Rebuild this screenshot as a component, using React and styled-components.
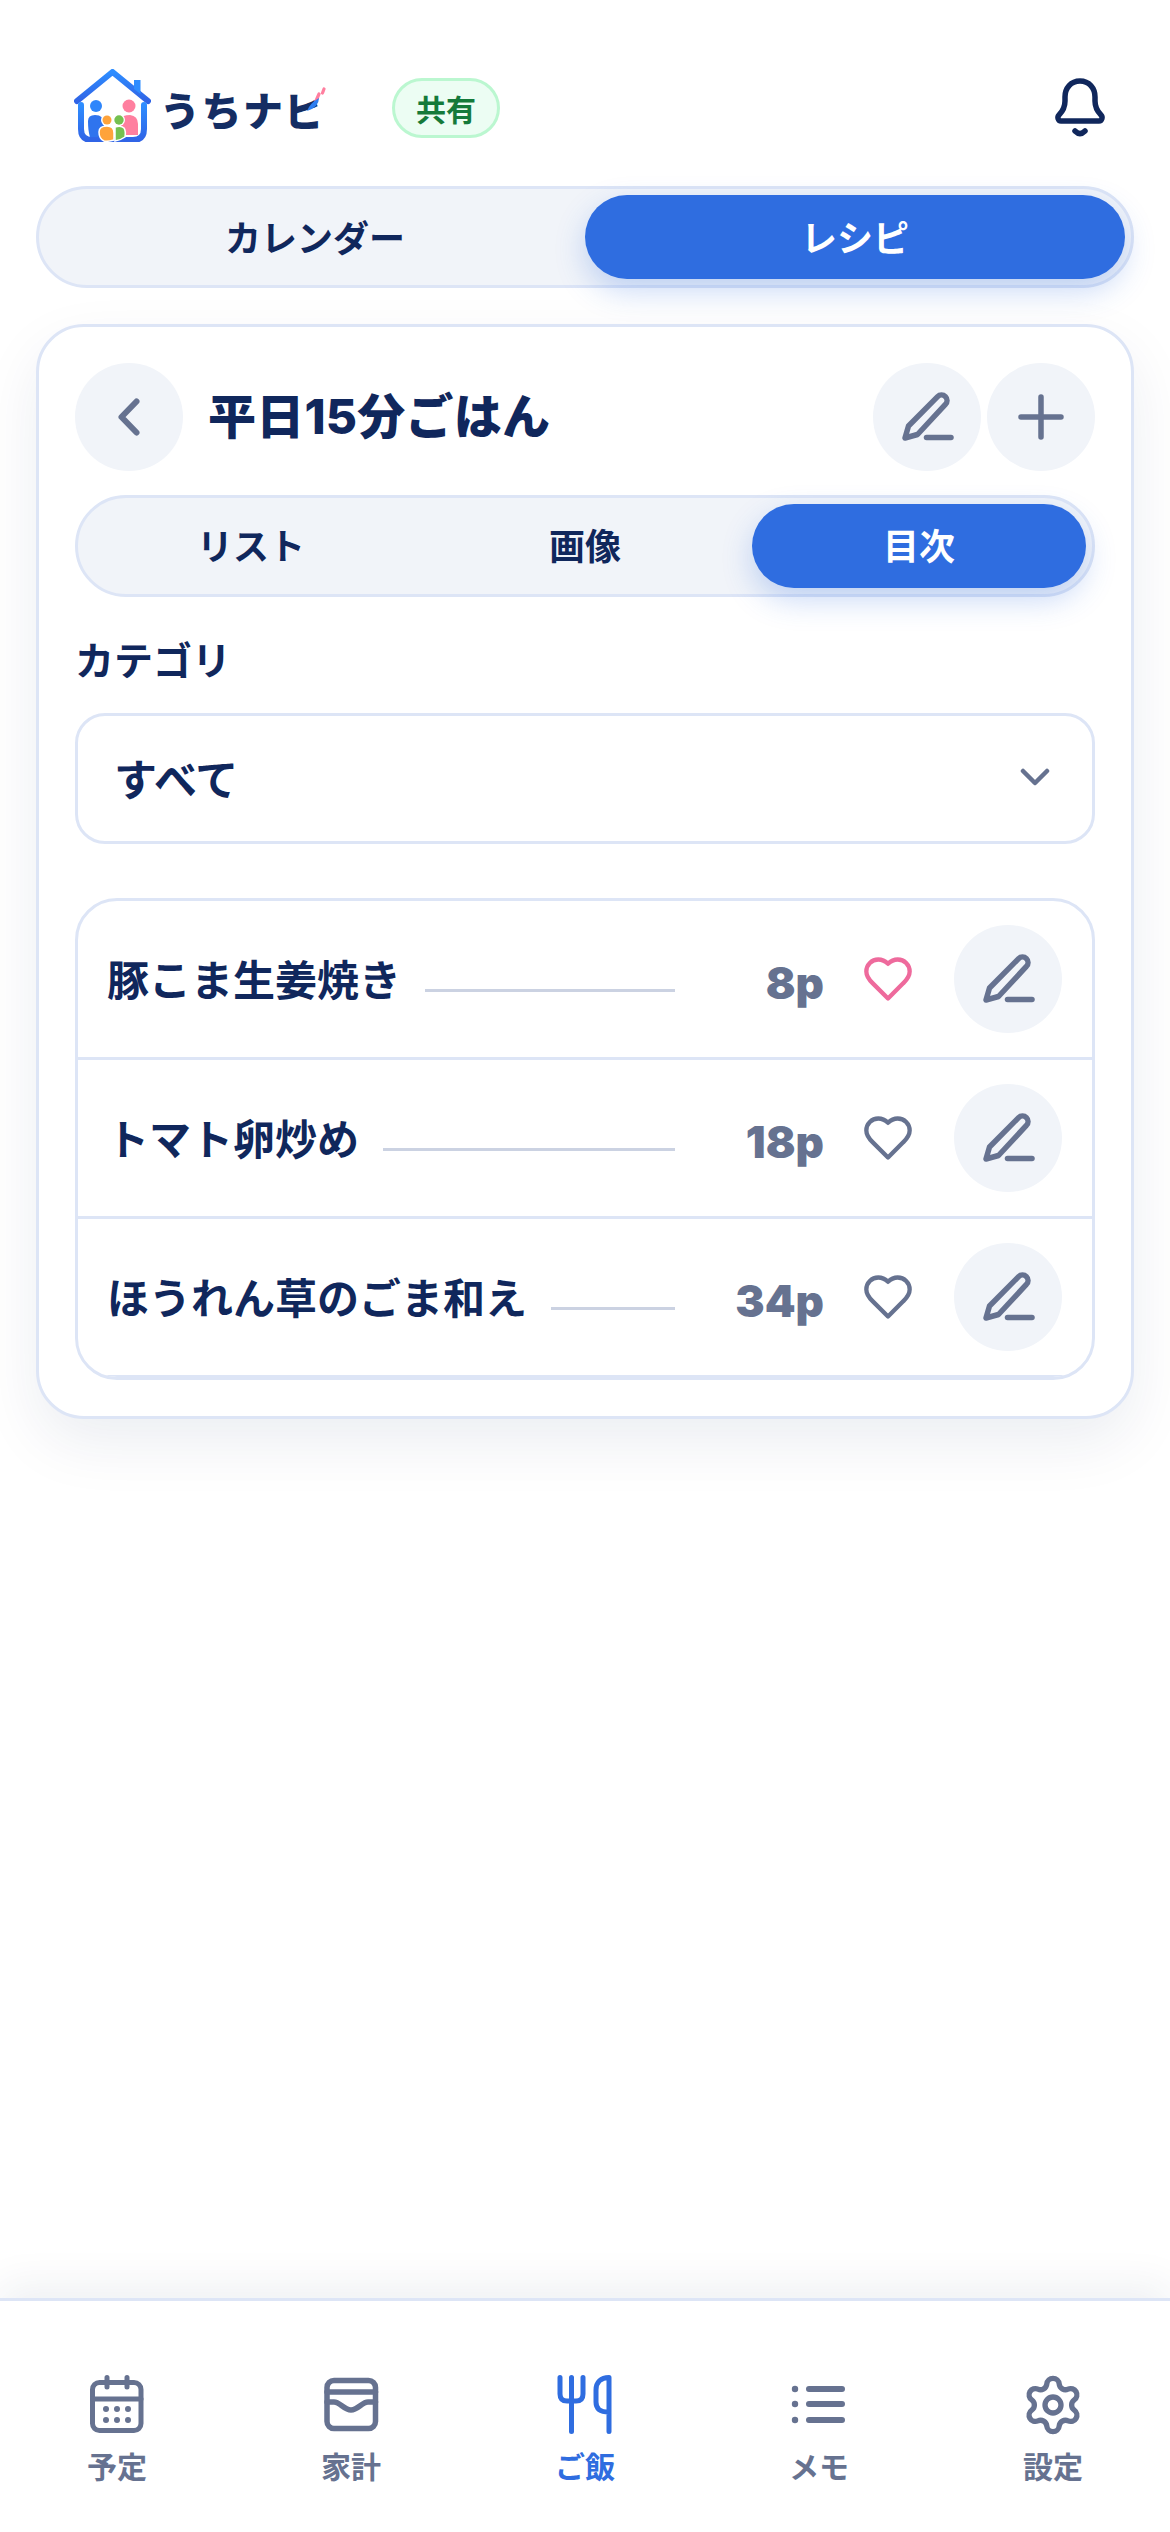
import React from "react";
import styled, { createGlobalStyle } from "styled-components";
import { Settings } from "lucide-react";

const NAVY = "#10275c";
const SLATE = "#667290";
const BLUE = "#2f6de0";
const LINE = "#dde5f6";
const SOFT = "#f1f4f9";
const FONT = `Inter, "Noto Sans CJK JP", sans-serif`;

const Global = createGlobalStyle`
  html, body { margin: 0; padding: 0; background: #fff; }
  body { font-family: ${FONT}; color: ${NAVY}; }
  * { box-sizing: border-box; }
`;

const Page = styled.div`
  width: 1170px;
  height: 2532px;
  display: flex;
  flex-direction: column;
  background: #fff;
  overflow: hidden;
`;
const Main = styled.main`
  flex: 1;
  padding: 48px 36px 0;
  display: flex;
  flex-direction: column;
`;
const Header = styled.header`
  height: 120px;
  margin-bottom: 18px;
  padding: 0 28px 0 38px;
  display: flex;
  align-items: center;
`;
const Brand = styled.div`
  position: relative;
  display: flex;
  align-items: center;
  gap: 9px;
  margin-top: -6px;
`;
const BrandText = styled.span`
  font-family: "Noto Sans CJK JP", sans-serif;
  font-size: 40px;
  font-weight: 900;
  letter-spacing: 1.5px;
  line-height: 1;
  color: #142d63;
  margin-top: 7px;
`;
const Spark = styled.svg`
  position: absolute;
  right: -4px;
  top: 12px;
`;
const Badge = styled.span`
  margin-left: 66px;
  width: 108px;
  height: 60px;
  border-radius: 30px;
  border: 3px solid #bbf7d0;
  background: #ecfdf3;
  color: #157a3a;
  font-size: 30px;
  font-weight: 700;
  display: flex;
  align-items: center;
  justify-content: center;
`;
const BellWrap = styled.div`
  margin-left: auto;
  width: 52px;
  height: 60px;
`;
const Tabs = styled.div`
  height: 102px;
  border: 3px solid ${LINE};
  border-radius: 51px;
  background: ${SOFT};
  padding: 6px;
  display: grid;
  grid-template-columns: repeat(${(p) => p.$count}, 1fr);
`;
const Tab = styled.div`
  border-radius: 42px;
  padding-bottom: 3px;
  display: flex;
  align-items: center;
  justify-content: center;
  font-size: 36px;
  font-weight: 700;
  color: ${(p) => (p.$active ? "#fff" : NAVY)};
  background: ${(p) => (p.$active ? BLUE : "transparent")};
  box-shadow: ${(p) => (p.$active ? "0 12px 30px rgba(47,109,224,.26)" : "none")};
`;
const Card = styled.section`
  margin-top: 36px;
  height: 1095px;
  border: 3px solid ${LINE};
  border-radius: 48px;
  background: #fff;
  padding: 36px;
  box-shadow: 0 24px 60px rgba(16, 39, 92, 0.08);
  display: flex;
  flex-direction: column;
`;
const TitleRow = styled.div`
  display: flex;
  align-items: center;
  gap: 6px;
  margin-bottom: 24px;
`;
const CircleButton = styled.button`
  width: 108px;
  height: 108px;
  flex: none;
  border: 0;
  border-radius: 50%;
  padding: 0;
  background: ${SOFT};
  display: flex;
`;
const Title = styled.h1`
  flex: 1;
  margin: 0 0 0 19px;
  font-size: 48px;
  font-weight: 800;
  line-height: 1.2;
  letter-spacing: 0.2px;
  color: ${NAVY};
`;
const FieldLabel = styled.div`
  margin-top: 40px;
  font-size: 39px;
  font-weight: 700;
  line-height: 48px;
  color: ${NAVY};
`;
const Select = styled.div`
  margin-top: 28px;
  height: 131px;
  border: 3px solid ${LINE};
  border-radius: 30px;
  padding: 0 42px 3px 36px;
  display: flex;
  align-items: center;
  justify-content: space-between;
  font-size: 43px;
  font-weight: 700;
  color: ${NAVY};
`;
const List = styled.div`
  margin-top: 54px;
  border: 3px solid ${LINE};
  border-radius: 42px;
  overflow: hidden;
`;
const Row = styled.div`
  height: 159px;
  border-bottom: 3px solid ${LINE};
  padding: 0 30px;
  display: flex;
  align-items: center;
`;
const RowTitle = styled.span`
  font-size: 42px;
  font-weight: 700;
  color: ${NAVY};
  white-space: nowrap;
  margin: 0 24px 3px -1px;
`;
const Leader = styled.span`
  flex: 1;
  height: 3px;
  margin-top: 24px;
  background: #cbd2e2;
`;
const PageNum = styled.span`
  width: 120px;
  margin: 8px -2px 0 29px;
  text-align: right;
  font-size: 44px;
  font-weight: 900;
  color: ${SLATE};
`;
const Fav = styled.svg`
  width: 52px;
  height: 52px;
  margin: 0 40px;
  flex: none;
  stroke: ${(p) => (p.$on ? "#ee6a9c" : SLATE)};
`;
const Nav = styled.nav`
  height: 234px;
  border-top: 3px solid ${LINE};
  background: #fff;
  box-shadow: 0 -12px 40px rgba(16, 39, 92, 0.07);
  display: grid;
  grid-template-columns: repeat(5, 1fr);
  padding-top: 68px;
`;
const NavItem = styled.div`
  display: flex;
  flex-direction: column;
  align-items: center;
  color: ${(p) => (p.$active ? BLUE : SLATE)};
`;
const NavIconBox = styled.div`
  width: 72px;
  height: 72px;
  display: flex;
  align-items: center;
  justify-content: center;
`;
const NavLabel = styled.span`
  margin-top: 8px;
  font-size: 30px;
  font-weight: 700;
  line-height: 36px;
`;

const Logo = () => (
  <svg width="77" height="73" viewBox="0 0 77 73">
    <defs>
      <linearGradient id="lg" x1="0" y1="0" x2="0" y2="1">
        <stop offset="0" stopColor="#2e8dff" />
        <stop offset="1" stopColor="#3064e6" />
      </linearGradient>
    </defs>
    <path d="M3 32 L38.5 3 L74 32" fill="none" stroke="url(#lg)" strokeWidth="6" strokeLinecap="round" strokeLinejoin="round" />
    <path d="M60 11 h6.500 v14 l-6.500 -5z" fill="#2e8dff" />
    <path d="M7 36 V60 Q7 71 18 71 H36 M70 36 V60 Q70 71 59 71 H41" fill="none" stroke="url(#lg)" strokeWidth="6" strokeLinecap="round" />
    <circle cx="22" cy="37" r="6" fill="#2e86fb" />
    <path d="M14 52 Q14 46 21 46 Q30 46 30 55 V68 H16 Q14 62 14 52Z" fill="#2f74ee" />
    <circle cx="55" cy="37" r="6.500" fill="#ff7f9f" />
    <path d="M47 50 Q48 46 56 46 Q64 47 64 55 V66 H47Z" fill="#ff7f9f" />
    <circle cx="33" cy="51" r="6" fill="#fff" />
    <circle cx="33" cy="51" r="4.500" fill="#ffa33a" />
    <path d="M25 63 Q25 57 33 57 Q40 57 40 64 V71 Q33 73 30 72 Q25 70 25 63Z" fill="#ffa33a" stroke="#fff" strokeWidth="1.500" />
    <circle cx="45" cy="51" r="6" fill="#fff" />
    <circle cx="45" cy="51" r="4.700" fill="#74c04f" />
    <path d="M41 58 Q47 56 50 59 Q52 62 51 68 Q47 71 41 72Z" fill="#74c04f" stroke="#fff" strokeWidth="1.500" />
  </svg>
);

const Sparkle = () => (
  <Spark width="26" height="34" viewBox="0 0 26 34">
    <rect x="6" y="3" width="20" height="16" fill="#fff" />
    <path d="M15 13 L11.500 21 M20 8 L18.500 12" stroke="#ff7f9f" strokeWidth="3.200" strokeLinecap="round" />
    <path d="M3 30 Q6 22 15 17 Q15 26 3 30Z" fill="#2e7ff0" />
  </Spark>
);

const Bell = () => (
  <svg width="52" height="60" viewBox="0 0 52 60" fill="none" stroke={NAVY} strokeWidth="5.500" strokeLinecap="round" strokeLinejoin="round">
    <path d="M26 3 C17 3 11 10 11 19 V23 C11 30 8 34 5 37 C3 39 4 43 7 43 H45 C48 43 49 39 47 37 C44 34 41 30 41 23 V19 C41 10 35 3 26 3Z" />
    <path d="M21 53 Q26 58 31 53" />
  </svg>
);

const Pen = () => (
  <svg width="108" height="108" viewBox="0 0 108 108" fill="none" stroke={SLATE} strokeLinecap="round" strokeLinejoin="round">
    <path d="M32 75 L35.500 63 L64.600 33.600 A5.500 5.500 0 0 1 72.400 41.400 L44.500 71.500 Z" strokeWidth="5.500" />
    <path d="M53.500 74.500 H78" strokeWidth="5.500" />
  </svg>
);
const Plus = () => (
  <svg width="108" height="108" viewBox="0 0 108 108" fill="none" stroke={SLATE} strokeWidth="5.500" strokeLinecap="round">
    <path d="M54 34 V74 M34 54 H74" />
  </svg>
);
const Back = () => (
  <svg width="108" height="108" viewBox="0 0 108 108" fill="none" stroke={SLATE} strokeWidth="6" strokeLinecap="round" strokeLinejoin="round">
    <path d="M61.500 38.500 L46.500 54 L61.500 69.500" />
  </svg>
);
const Chevron = () => (
  <svg width="30" height="20" viewBox="0 0 30 20" fill="none" stroke={SLATE} strokeWidth="4.500" strokeLinecap="round" strokeLinejoin="round">
    <path d="M3 4 L15 16 L27 4" />
  </svg>
);
const HeartIcon = ({ on }) => (
  <Fav $on={on} viewBox="0 0 24 24" fill="none" strokeWidth="2" strokeLinecap="round" strokeLinejoin="round">
    <path d="M19 14c1.490-1.460 3-3.210 3-5.500A5.500 5.500 0 0 0 16.500 3c-1.760 0-3 .5-4.500 2-1.500-1.500-2.740-2-4.500-2A5.500 5.500 0 0 0 2 8.500c0 2.300 1.500 4.050 3 5.500l7 7Z" />
  </Fav>
);

const CalendarIcon = () => (
  <svg width="72" height="72" viewBox="0 0 72 72" fill="none" stroke="currentColor" strokeWidth="5" strokeLinecap="round" strokeLinejoin="round">
    <rect x="11.500" y="13.500" width="48.500" height="48" rx="7" />
    <path d="M26 8.500 V18 M46 8.500 V18 M11.500 30 H60" />
    <g fill="currentColor" stroke="none">
      <circle cx="25" cy="40" r="3" /><circle cx="36" cy="40" r="3" /><circle cx="47" cy="40" r="3" />
      <circle cx="25" cy="51" r="3" /><circle cx="36" cy="51" r="3" /><circle cx="47" cy="51" r="3" />
    </g>
  </svg>
);
const WalletIcon = () => (
  <svg width="72" height="72" viewBox="0 0 72 72" fill="none" stroke="currentColor" strokeWidth="5.500" strokeLinecap="round" strokeLinejoin="round">
    <rect x="12" y="11.500" width="48.500" height="48" rx="7" />
    <path d="M12 23 H60.500" />
    <path d="M12 33 H19 C25 33 29 41 36 41 C43 41 47 33 53 33 H60.500" />
  </svg>
);
const UtensilsIcon = () => (
  <svg width="72" height="72" viewBox="0 0 72 72" fill="none" stroke="currentColor" strokeWidth="5" strokeLinecap="round" strokeLinejoin="round">
    <path d="M11 8.500 V25 Q11 32 18 32 H27 Q34 32 34 25 V8.500 M22.500 8.500 V62.500" />
    <path d="M60 62.500 V8.500 C52 8.500 47 13 47 21 V33 C47 40 51 43 60 43" />
  </svg>
);
const ListIcon = () => (
  <svg width="72" height="72" viewBox="0 0 72 72" fill="none" stroke="currentColor" strokeWidth="6" strokeLinecap="round">
    <path d="M26 20 H59 M26 35 H59 M26 51 H59" />
    <g fill="currentColor" stroke="none">
      <circle cx="12" cy="20" r="3.200" /><circle cx="12" cy="35" r="3.200" /><circle cx="12" cy="51" r="3.200" />
    </g>
  </svg>
);

const recipes = [
  { name: "豚こま生姜焼き", page: "8p", fav: true },
  { name: "トマト卵炒め", page: "18p" },
  { name: "ほうれん草のごま和え", page: "34p" },
];
const navs = [
  { label: "予定", Icon: CalendarIcon },
  { label: "家計", Icon: WalletIcon },
  { label: "ご飯", Icon: UtensilsIcon, active: true },
  { label: "メモ", Icon: ListIcon },
  { label: "設定", Icon: () => <Settings size={64} strokeWidth={2} /> },
];

export default function App() {
  return (
    <Page>
      <Global />
      <Main>
        <Header>
          <Brand>
            <Logo />
            <BrandText>うちナビ</BrandText>
            <Sparkle />
          </Brand>
          <Badge>共有</Badge>
          <BellWrap><Bell /></BellWrap>
        </Header>
        <Tabs $count={2}>
          <Tab>カレンダー</Tab>
          <Tab $active>レシピ</Tab>
        </Tabs>
        <Card>
          <TitleRow>
            <CircleButton><Back /></CircleButton>
            <Title>平日15分ごはん</Title>
            <CircleButton><Pen /></CircleButton>
            <CircleButton><Plus /></CircleButton>
          </TitleRow>
          <Tabs $count={3}>
            <Tab>リスト</Tab>
            <Tab>画像</Tab>
            <Tab $active>目次</Tab>
          </Tabs>
          <FieldLabel>カテゴリ</FieldLabel>
          <Select>
            <span>すべて</span>
            <Chevron />
          </Select>
          <List>
            {recipes.map((r) => (
              <Row key={r.name}>
                <RowTitle>{r.name}</RowTitle>
                <Leader />
                <PageNum>{r.page}</PageNum>
                <HeartIcon on={r.fav} />
                <CircleButton><Pen /></CircleButton>
              </Row>
            ))}
          </List>
        </Card>
      </Main>
      <Nav>
        {navs.map(({ label, Icon, active }) => (
          <NavItem key={label} $active={active}>
            <NavIconBox><Icon /></NavIconBox>
            <NavLabel>{label}</NavLabel>
          </NavItem>
        ))}
      </Nav>
    </Page>
  );
}
